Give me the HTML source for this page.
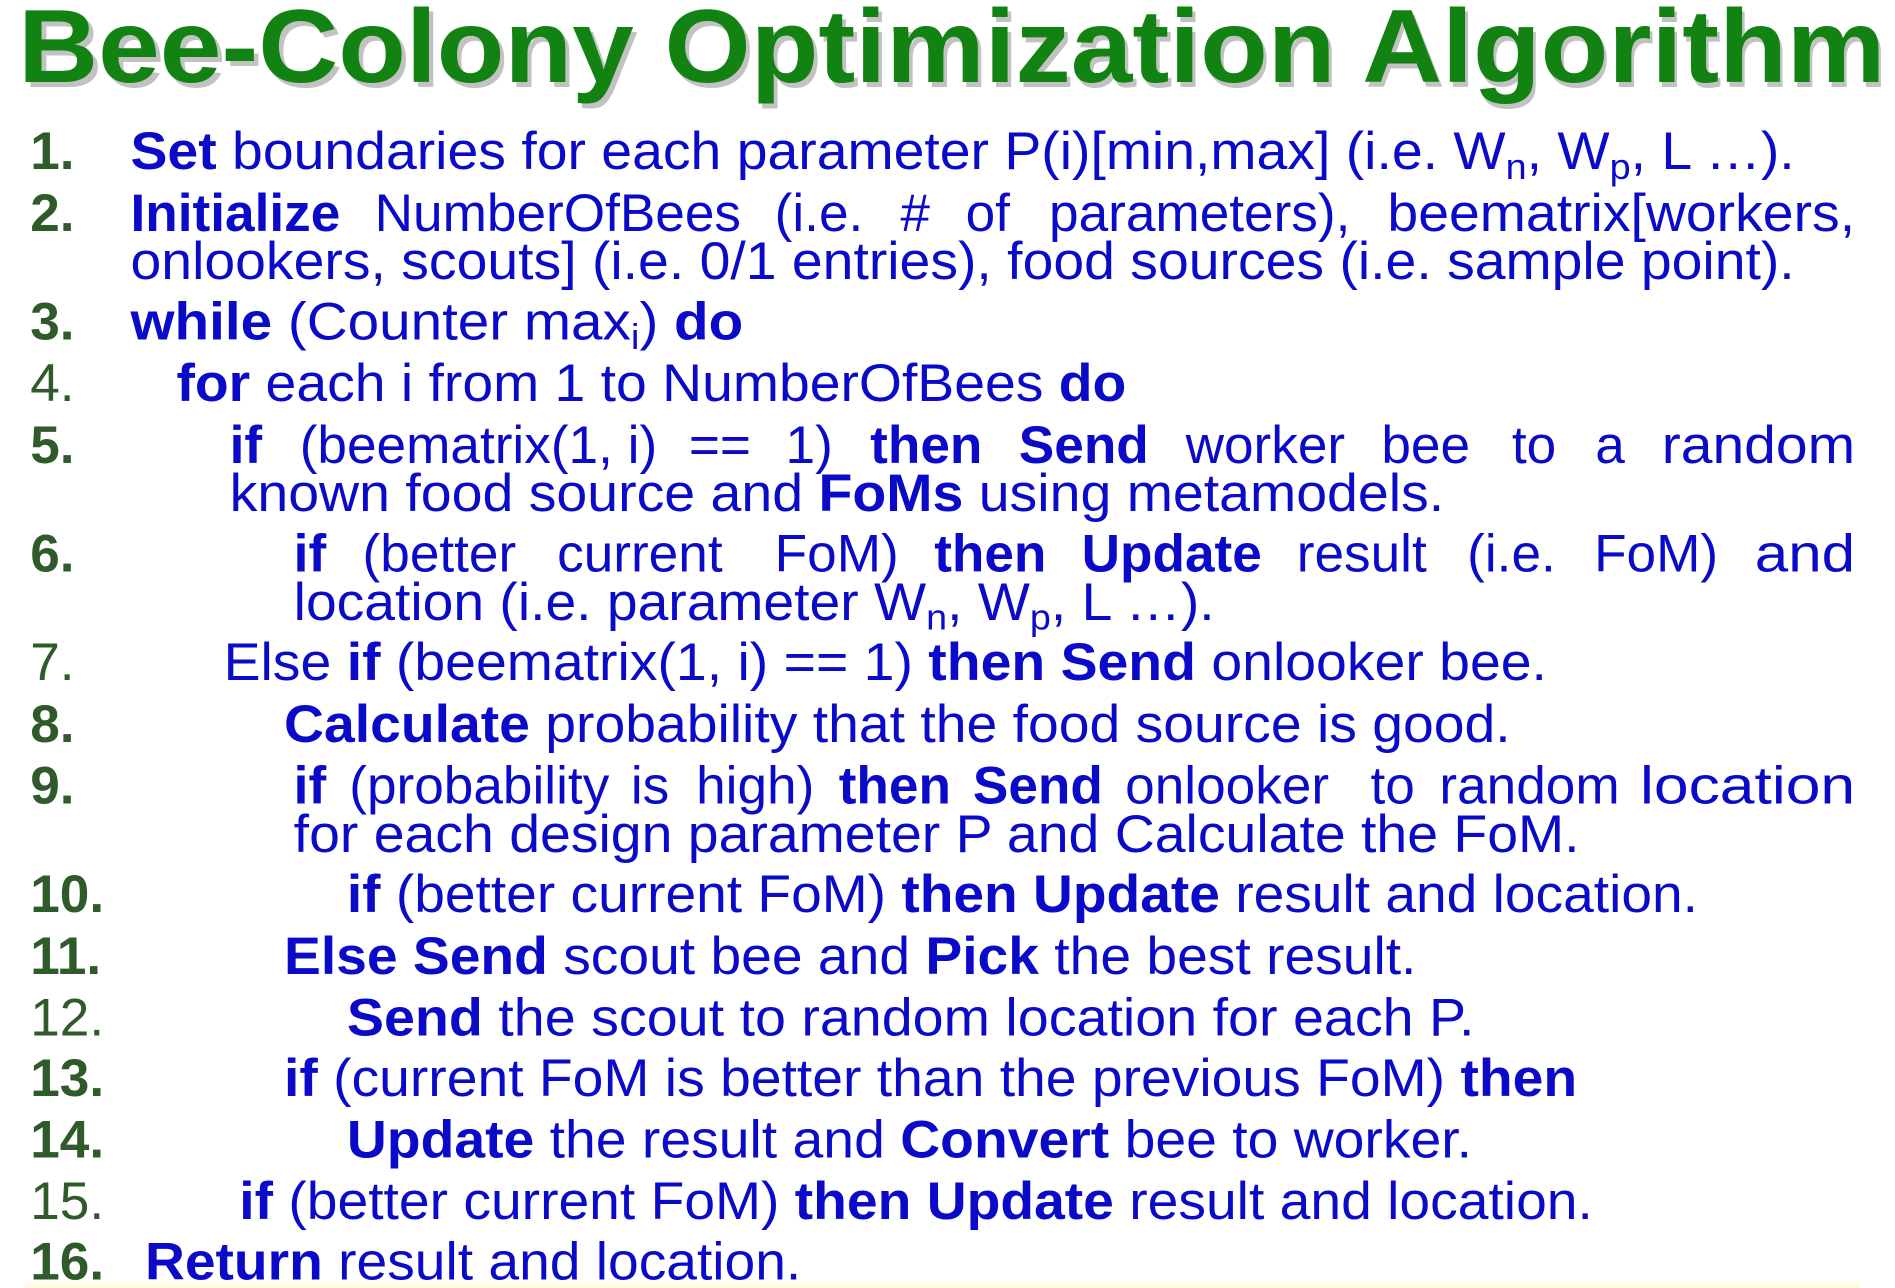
<!DOCTYPE html>
<html><head><meta charset="utf-8"><style>
html,body{margin:0;padding:0;background:#fff;}
svg{display:block;}
.t{font-family:"Liberation Sans",Arial,sans-serif;font-size:44px;fill:#0a0ac8;}
.n{font-family:"Liberation Sans",Arial,sans-serif;font-size:44px;fill:#2f5a2a;}
.b{font-weight:bold;}
</style></head><body>
<svg width="1895" height="1288" viewBox="0 0 1568 1066" preserveAspectRatio="none" xmlns="http://www.w3.org/2000/svg">
<rect x="0" y="0" width="1568" height="1066" fill="#fff"/>
<rect x="20" y="1062" width="1520" height="4" fill="#fffbe0"/>
<text x="19" y="72" textLength="1543" lengthAdjust="spacingAndGlyphs" font-family="Liberation Sans,Arial,sans-serif" font-weight="bold" font-size="86" fill="#9a9a9a" opacity="0.6">Bee-Colony Optimization Algorithm</text>
<text x="15" y="68" textLength="1545" lengthAdjust="spacingAndGlyphs" font-family="Liberation Sans,Arial,sans-serif" font-weight="bold" font-size="86" fill="#128212">Bee-Colony Optimization Algorithm</text>

<g class="n">
<text x="25" y="140" class="b">1.</text>
<text x="25" y="191" class="b">2.</text>
<text x="25" y="281" class="b">3.</text>
<text x="25" y="332">4.</text>
<text x="25" y="383" class="b">5.</text>
<text x="25" y="473" class="b">6.</text>
<text x="25" y="563">7.</text>
<text x="25" y="614" class="b">8.</text>
<text x="25" y="665" class="b">9.</text>
<text x="25" y="755" class="b">10.</text>
<text x="25" y="806" class="b">11.</text>
<text x="25" y="857">12.</text>
<text x="25" y="907" class="b">13.</text>
<text x="25" y="958" class="b">14.</text>
<text x="25" y="1009">15.</text>
<text x="25" y="1059" class="b">16.</text>
</g>

<g class="t">
<text x="108" y="140" textLength="1377" lengthAdjust="spacingAndGlyphs"><tspan class="b">Set</tspan> boundaries for each parameter P(i)[min,max] (i.e. W<tspan font-size="30" dy="8">n</tspan><tspan dy="-8">, W</tspan><tspan font-size="30" dy="8">p</tspan><tspan dy="-8">, L …).</tspan></text>

<text x="108" y="191" class="b">Initialize</text>
<text x="310" y="191">NumberOfBees</text>
<text x="641" y="191">(i.e.</text>
<text x="745" y="191">#</text>
<text x="799" y="191">of</text>
<text x="868" y="191">parameters),</text>
<text x="1148" y="191" textLength="387" lengthAdjust="spacingAndGlyphs">beematrix[workers,</text>

<text x="108" y="231" textLength="1377" lengthAdjust="spacingAndGlyphs">onlookers, scouts] (i.e. 0/1 entries), food sources (i.e. sample point).</text>
<text x="108" y="281" textLength="507" lengthAdjust="spacingAndGlyphs"><tspan class="b">while</tspan> (Counter  max<tspan font-size="30" dy="8">i</tspan><tspan dy="-8">) </tspan><tspan class="b">do</tspan></text>
<text x="146" y="332" textLength="786" lengthAdjust="spacingAndGlyphs"><tspan class="b">for</tspan> each i from 1 to NumberOfBees <tspan class="b">do</tspan></text>

<text x="190" y="383" class="b">if</text>
<text x="248" y="383">(beematrix(1, i)</text>
<text x="570" y="383">==</text>
<text x="650" y="383">1)</text>
<text x="720" y="383" class="b">then</text>
<text x="843" y="383" class="b">Send</text>
<text x="981" y="383">worker</text>
<text x="1143" y="383">bee</text>
<text x="1251" y="383">to</text>
<text x="1320" y="383">a</text>
<text x="1375" y="383" textLength="160" lengthAdjust="spacingAndGlyphs">random</text>

<text x="190" y="423" textLength="1005" lengthAdjust="spacingAndGlyphs">known food source and <tspan class="b">FoMs</tspan> using metamodels.</text>

<text x="243" y="473" class="b">if</text>
<text x="300" y="473">(better</text>
<text x="461" y="473">current</text>
<text x="641" y="473">FoM)</text>
<text x="773" y="473" class="b">then</text>
<text x="895" y="473" class="b">Update</text>
<text x="1073" y="473">result</text>
<text x="1214" y="473">(i.e.</text>
<text x="1319" y="473">FoM)</text>
<text x="1452" y="473" textLength="83" lengthAdjust="spacingAndGlyphs">and</text>

<text x="243" y="513" textLength="762" lengthAdjust="spacingAndGlyphs">location (i.e. parameter W<tspan font-size="30" dy="8">n</tspan><tspan dy="-8">, W</tspan><tspan font-size="30" dy="8">p</tspan><tspan dy="-8">, L …).</tspan></text>
<text x="185" y="563" textLength="1095" lengthAdjust="spacingAndGlyphs">Else <tspan class="b">if</tspan> (beematrix(1, i) == 1) <tspan class="b">then Send</tspan> onlooker bee.</text>
<text x="235" y="614" textLength="1015" lengthAdjust="spacingAndGlyphs"><tspan class="b">Calculate</tspan> probability that the food source is good.</text>

<text x="243" y="665" class="b">if</text>
<text x="289" y="665">(probability</text>
<text x="522" y="665">is</text>
<text x="576" y="665">high)</text>
<text x="694" y="665" class="b">then</text>
<text x="805" y="665" class="b">Send</text>
<text x="931" y="665">onlooker</text>
<text x="1134" y="665">to</text>
<text x="1191" y="665">random</text>
<text x="1357" y="665" textLength="178" lengthAdjust="spacingAndGlyphs">location</text>

<text x="243" y="705" textLength="1064" lengthAdjust="spacingAndGlyphs">for each design parameter P and Calculate the FoM.</text>
<text x="287" y="755" textLength="1118" lengthAdjust="spacingAndGlyphs"><tspan class="b">if</tspan> (better current FoM) <tspan class="b">then Update</tspan> result and location.</text>
<text x="235" y="806" textLength="937" lengthAdjust="spacingAndGlyphs"><tspan class="b">Else Send</tspan> scout bee and <tspan class="b">Pick</tspan> the best result.</text>
<text x="287" y="857" textLength="933" lengthAdjust="spacingAndGlyphs"><tspan class="b">Send</tspan> the scout to random location for each P.</text>
<text x="235" y="907" textLength="1070" lengthAdjust="spacingAndGlyphs"><tspan class="b">if</tspan> (current FoM is better than the previous FoM) <tspan class="b">then</tspan></text>
<text x="287" y="958" textLength="931" lengthAdjust="spacingAndGlyphs"><tspan class="b">Update</tspan> the result and <tspan class="b">Convert</tspan> bee to worker.</text>
<text x="198" y="1009" textLength="1120" lengthAdjust="spacingAndGlyphs"><tspan class="b">if</tspan> (better current FoM) <tspan class="b">then Update</tspan> result and location.</text>
<text x="120" y="1059" textLength="543" lengthAdjust="spacingAndGlyphs"><tspan class="b">Return</tspan> result and location.</text>
</g>
</svg>
</body></html>
